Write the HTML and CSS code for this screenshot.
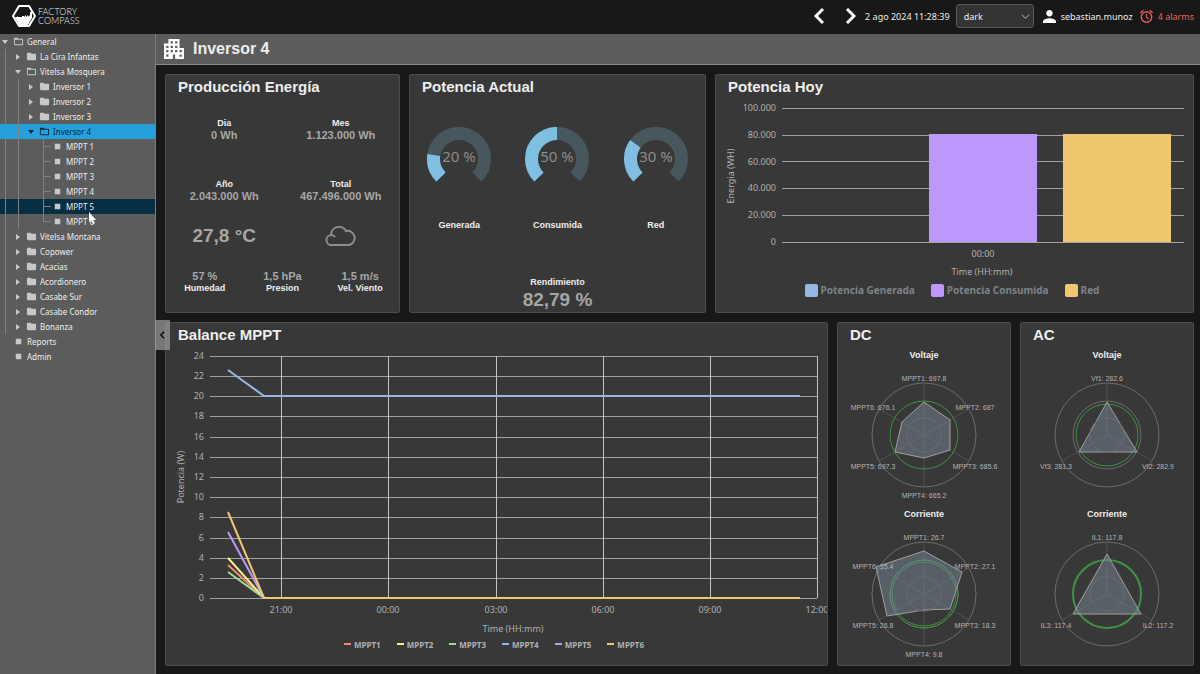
FILE: index.html
```html
<!DOCTYPE html>
<html lang="es">
<head>
    <meta charset="UTF-8">
    <meta name="viewport" content="width=device-width, initial-scale=1.0">
    <title>Factory Compass - Inversor 4</title>
    <link rel="stylesheet" href="styles.css">
</head>
<body>
    <!-- Icon definitions -->
    <svg class="icon-defs" aria-hidden="true">
        <symbol id="folder" viewBox="0 0 24 24">
            <path d="M10 4H4c-1.1 0-2 .9-2 2v12c0 1.1.9 2 2 2h16c1.1 0 2-.9 2-2V8c0-1.1-.9-2-2-2h-8l-2-2z"/>
        </symbol>
        <symbol id="folder-open" viewBox="0 0 24 24">
            <path d="M20 6h-8l-2-2H4c-1.1 0-2 .9-2 2v12c0 1.1.9 2 2 2h16c1.1 0 2-.9 2-2V8c0-1.1-.9-2-2-2zm0 12H4V8h16v10z"/>
        </symbol>
        <symbol id="leaf" viewBox="0 0 24 24">
            <path d="M6 6h12v12H6z"/>
        </symbol>
        <symbol id="arrow-right" viewBox="0 0 10 10">
            <path d="M3 2l4 3-4 3z"/>
        </symbol>
        <symbol id="arrow-down" viewBox="0 0 10 10">
            <path d="M2 3h6l-3 4z"/>
        </symbol>
    </svg>

    <header class="topbar">
        <a href="#" class="brand">
            <svg class="brand-logo" viewBox="0 0 24 24" aria-hidden="true">
                <path class="hex" d="M7 2h10l6 10-6 10H7L1 12z"/>
                <path class="plant" d="M3 13h2v-1l1 1h4v-1h2v1l2-2v2l2-2v2l2-2V8h2v6l-4 7H7z"/>
            </svg>
            <span class="brand-name">FACTORY<br>COMPASS</span>
        </a>
        <div class="topbar-tools">
            <button class="nav-btn" aria-label="Anterior">
                <svg viewBox="0 0 10 16"><path d="M9 1L2 8l7 7"/></svg>
            </button>
            <button class="nav-btn" aria-label="Siguiente">
                <svg viewBox="0 0 10 16"><path d="M1 1l7 7-7 7"/></svg>
            </button>
            <time class="clock">2 ago 2024 11:28:39</time>
            <div class="theme-select">
                <select aria-label="Tema">
                    <option>dark</option>
                    <option>light</option>
                </select>
                <svg viewBox="0 0 10 10" aria-hidden="true"><path d="M1 3l4 4 4-4"/></svg>
            </div>
            <a href="#" class="user">
                <svg viewBox="4 4 16 16" aria-hidden="true"><path d="M12 12c2.2 0 4-1.8 4-4s-1.8-4-4-4-4 1.8-4 4 1.8 4 4 4zm0 2c-2.7 0-8 1.3-8 4v2h16v-2c0-2.7-5.3-4-8-4z"/></svg>
                sebastian.munoz
            </a>
            <a href="#" class="alarms">
                <svg viewBox="2 1 20 21" aria-hidden="true"><path d="M22 5.72l-4.6-3.86-1.29 1.53 4.6 3.86L22 5.72zM7.88 3.39L6.6 1.86 2 5.71l1.29 1.53 4.59-3.85zM12.5 8H11v6l4.75 2.85.75-1.23-4-2.37V8zM12 4c-4.97 0-9 4.03-9 9s4.02 9 9 9c4.97 0 9-4.03 9-9s-4.03-9-9-9zm0 16c-3.87 0-7-3.13-7-7s3.13-7 7-7 7 3.13 7 7-3.13 7-7 7z"/></svg>
                4 alarms
            </a>
        </div>
    </header>

    <div class="layout">
        <nav class="sidebar">
            <ul class="tree">
                <li>
                    <a href="#" class="row"><svg class="arrow"><use href="#arrow-down"/></svg><svg class="icon"><use href="#folder-open"/></svg>General</a>
                    <ul class="guide">
                        <li><a href="#" class="row"><svg class="arrow"><use href="#arrow-right"/></svg><svg class="icon"><use href="#folder"/></svg>La Cira Infantas</a></li>
                        <li>
                            <a href="#" class="row"><svg class="arrow"><use href="#arrow-down"/></svg><svg class="icon"><use href="#folder-open"/></svg>Vitelsa Mosquera</a>
                            <ul class="guide">
                                <li><a href="#" class="row"><svg class="arrow"><use href="#arrow-right"/></svg><svg class="icon"><use href="#folder"/></svg>Inversor 1</a></li>
                                <li><a href="#" class="row"><svg class="arrow"><use href="#arrow-right"/></svg><svg class="icon"><use href="#folder"/></svg>Inversor 2</a></li>
                                <li><a href="#" class="row"><svg class="arrow"><use href="#arrow-right"/></svg><svg class="icon"><use href="#folder"/></svg>Inversor 3</a></li>
                                <li>
                                    <a href="#" class="row selected"><svg class="arrow"><use href="#arrow-down"/></svg><svg class="icon"><use href="#folder-open"/></svg>Inversor 4</a>
                                    <ul>
                                        <li><a href="#" class="row"><span class="elbow"></span><svg class="icon"><use href="#leaf"/></svg>MPPT 1</a></li>
                                        <li><a href="#" class="row"><span class="elbow"></span><svg class="icon"><use href="#leaf"/></svg>MPPT 2</a></li>
                                        <li><a href="#" class="row"><span class="elbow"></span><svg class="icon"><use href="#leaf"/></svg>MPPT 3</a></li>
                                        <li><a href="#" class="row"><span class="elbow"></span><svg class="icon"><use href="#leaf"/></svg>MPPT 4</a></li>
                                        <li>
                                            <a href="#" class="row hovered"><span class="elbow"></span><svg class="icon"><use href="#leaf"/></svg>MPPT 5
                                                <svg class="pointer" viewBox="0 0 8 12" aria-hidden="true"><path d="M0 0v10l2-2 2 4 2-1-2-3h3z"/></svg>
                                            </a>
                                        </li>
                                        <li><a href="#" class="row"><span class="elbow last"></span><svg class="icon"><use href="#leaf"/></svg>MPPT 6</a></li>
                                    </ul>
                                </li>
                            </ul>
                        </li>
                        <li><a href="#" class="row"><svg class="arrow"><use href="#arrow-right"/></svg><svg class="icon"><use href="#folder"/></svg>Vitelsa Montana</a></li>
                        <li><a href="#" class="row"><svg class="arrow"><use href="#arrow-right"/></svg><svg class="icon"><use href="#folder"/></svg>Copower</a></li>
                        <li><a href="#" class="row"><svg class="arrow"><use href="#arrow-right"/></svg><svg class="icon"><use href="#folder"/></svg>Acacias</a></li>
                        <li><a href="#" class="row"><svg class="arrow"><use href="#arrow-right"/></svg><svg class="icon"><use href="#folder"/></svg>Acordionero</a></li>
                        <li><a href="#" class="row"><svg class="arrow"><use href="#arrow-right"/></svg><svg class="icon"><use href="#folder"/></svg>Casabe Sur</a></li>
                        <li><a href="#" class="row"><svg class="arrow"><use href="#arrow-right"/></svg><svg class="icon"><use href="#folder"/></svg>Casabe Condor</a></li>
                        <li><a href="#" class="row"><svg class="arrow"><use href="#arrow-right"/></svg><svg class="icon"><use href="#folder"/></svg>Bonanza</a></li>
                    </ul>
                </li>
                <li><a href="#" class="row"><span class="arrow"></span><svg class="icon"><use href="#leaf"/></svg>Reports</a></li>
                <li><a href="#" class="row"><span class="arrow"></span><svg class="icon"><use href="#leaf"/></svg>Admin</a></li>
            </ul>
        </nav>

        <button class="collapse-btn" aria-label="Ocultar menú">
            <svg viewBox="0 0 6 10"><path d="M5 1L1 5l4 4"/></svg>
        </button>

        <main class="content">
            <div class="page-title">
                <svg viewBox="3 3 18 18" aria-hidden="true"><path d="M17 11V3H7v4H3v14h8v-4h2v4h8V11h-4zM7 19H5v-2h2v2zm0-4H5v-2h2v2zm0-4H5V9h2v2zm4 4H9v-2h2v2zm0-4H9V9h2v2zm0-4H9V5h2v2zm4 8h-2v-2h2v2zm0-4h-2V9h2v2zm0-4h-2V5h2v2zm4 12h-2v-2h2v2zm0-4h-2v-2h2v2z"/></svg>
                <h1>Inversor 4</h1>
            </div>

            <div class="dashboard">
                <div class="cards cards-top">
                    <!-- Produccion -->
                    <section class="card">
                        <h2>Producción Energía</h2>
                        <div class="production">
                            <div class="stats two">
                                <div><b>Dia</b><span class="value">0 Wh</span></div>
                                <div><b>Mes</b><span class="value">1.123.000 Wh</span></div>
                            </div>
                            <div class="stats two">
                                <div><b>Año</b><span class="value">2.043.000 Wh</span></div>
                                <div><b>Total</b><span class="value">467.496.000 Wh</span></div>
                            </div>
                            <div class="stats two">
                                <div class="value-lg">27,8 °C</div>
                                <div><svg class="cloud" viewBox="0 0 32 20" role="img" aria-label="Nublado"><path d="M7 19a5 5 0 0 1-1-10 8 8 0 0 1 15-4 7 7 0 0 1 3 14zM6 9q3 0 4 2"/></svg></div>
                            </div>
                            <div class="stats three">
                                <div><span class="value">57 %</span><b>Humedad</b></div>
                                <div><span class="value">1,5 hPa</span><b>Presion</b></div>
                                <div><span class="value">1,5 m/s</span><b>Vel. Viento</b></div>
                            </div>
                        </div>
                    </section>

                    <!-- Potencia actual -->
                    <section class="card">
                        <h2>Potencia Actual</h2>
                        <div class="gauges">
                            <div class="gauge">
                                <svg viewBox="0 0 64 64">
                                    <path class="track" d="M14 50A25.5 25.5 0 1 1 50 50"/>
                                    <path class="level" pathLength="100" stroke-dasharray="20 100" d="M14 50A25.5 25.5 0 1 1 50 50"/>
                                    <text x="32" y="35">20 %</text>
                                </svg>
                                <b>Generada</b>
                            </div>
                            <div class="gauge">
                                <svg viewBox="0 0 64 64">
                                    <path class="track" d="M14 50A25.5 25.5 0 1 1 50 50"/>
                                    <path class="level" pathLength="100" stroke-dasharray="50 100" d="M14 50A25.5 25.5 0 1 1 50 50"/>
                                    <text x="32" y="35">50 %</text>
                                </svg>
                                <b>Consumida</b>
                            </div>
                            <div class="gauge">
                                <svg viewBox="0 0 64 64">
                                    <path class="track" d="M14 50A25.5 25.5 0 1 1 50 50"/>
                                    <path class="level" pathLength="100" stroke-dasharray="30 100" d="M14 50A25.5 25.5 0 1 1 50 50"/>
                                    <text x="32" y="35">30 %</text>
                                </svg>
                                <b>Red</b>
                            </div>
                        </div>
                        <div class="performance">
                            <b>Rendimiento</b>
                            <span class="value-lg">82,79 %</span>
                        </div>
                    </section>

                    <!-- Potencia hoy -->
                    <section class="card">
                        <h2>Potencia Hoy</h2>
                        <svg class="chart" viewBox="0 0 477 181">
                            <path class="grid" d="M66 9h402M66 36h402M66 62h402M66 89h402M66 116h402M66 143h402"/>
                            <rect class="bar-purple" x="213" y="35" width="108" height="108"/>
                            <rect class="bar-orange" x="347" y="35" width="108" height="108"/>
                            <g class="axis axis-y">
                                <text x="60" y="12">100.000</text>
                                <text x="60" y="39">80.000</text>
                                <text x="60" y="66">60.000</text>
                                <text x="60" y="92">40.000</text>
                                <text x="60" y="119">20.000</text>
                                <text x="60" y="146">0</text>
                            </g>
                            <g class="axis axis-x">
                                <text x="267" y="158">00:00</text>
                                <text x="266" y="176">Time (HH:mm)</text>
                                <text transform="translate(18 77) rotate(-90)">Energia (WH)</text>
                            </g>
                        </svg>
                        <ul class="legend legend-bars">
                            <li><i class="blue"></i>Potencia Generada</li>
                            <li><i class="purple"></i>Potencia Consumida</li>
                            <li><i class="orange"></i>Red</li>
                        </ul>
                    </section>
                </div>

                <div class="cards cards-bottom">
                    <!-- Balance -->
                    <section class="card">
                        <h2>Balance MPPT</h2>
                        <svg class="chart" viewBox="0 0 661 288">
                            <path class="grid" d="M44 9h607M44 29h607M44 49h607M44 69h607M44 90h607M44 110h607M44 130h607M44 150h607M44 170h607M44 191h607M44 211h607M44 231h607M44 251h607"/>
                            <path class="grid grid-v" d="M115 9v242M222 9v242M330 9v242M437 9v242M544 9v242M651 9v242"/>
                            <path class="line red" d="M62 218l36 33h536"/>
                            <path class="line yellow" d="M62 211l36 40h536"/>
                            <path class="line green" d="M62 225l36 26h536"/>
                            <path class="line blue" d="M62 23l36 26h536"/>
                            <path class="line purple" d="M62 185l36 66h536"/>
                            <path class="line orange" d="M62 165l36 86h536"/>
                            <g class="axis axis-y">
                                <text x="38" y="12">24</text>
                                <text x="38" y="32">22</text>
                                <text x="38" y="52">20</text>
                                <text x="38" y="72">18</text>
                                <text x="38" y="93">16</text>
                                <text x="38" y="113">14</text>
                                <text x="38" y="133">12</text>
                                <text x="38" y="153">10</text>
                                <text x="38" y="173">8</text>
                                <text x="38" y="194">6</text>
                                <text x="38" y="214">4</text>
                                <text x="38" y="234">2</text>
                                <text x="38" y="254">0</text>
                            </g>
                            <g class="axis axis-x">
                                <text x="115" y="266">21:00</text>
                                <text x="222" y="266">00:00</text>
                                <text x="330" y="266">03:00</text>
                                <text x="437" y="266">06:00</text>
                                <text x="544" y="266">09:00</text>
                                <text x="651" y="266">12:00</text>
                                <text x="347" y="285">Time (HH:mm)</text>
                                <text transform="translate(18 130) rotate(-90)">Potencia (W)</text>
                            </g>
                        </svg>
                        <ul class="legend legend-lines">
                            <li><i class="red"></i>MPPT1</li>
                            <li><i class="yellow"></i>MPPT2</li>
                            <li><i class="green"></i>MPPT3</li>
                            <li><i class="blue"></i>MPPT4</li>
                            <li><i class="purple"></i>MPPT5</li>
                            <li><i class="orange"></i>MPPT6</li>
                        </ul>
                    </section>

                    <!-- DC -->
                    <section class="card">
                        <h2>DC</h2>
                        <h3>Voltaje</h3>
                        <svg class="radar" viewBox="0 0 172 142">
                            <circle cx="86" cy="71" r="52"/>
                            <path class="spokes" d="M86 19v104M41 45l90 52M131 45L41 97"/>
                            <polygon points="86,38 112,56 112,86 86,94 57,88 64,58"/>
                            <circle cx="86" cy="71" r="17"/>
                            <circle class="ok" cx="86" cy="71" r="34"/>
                            <text x="86" y="17">MPPT1: 697.8</text>
                            <text x="137" y="46">MPPT2: 687</text>
                            <text x="137" y="105">MPPT3: 685.6</text>
                            <text x="86" y="134">MPPT4: 665.2</text>
                            <text x="35" y="105">MPPT5: 697.3</text>
                            <text x="35" y="46">MPPT6: 676.1</text>
                        </svg>
                        <h3>Corriente</h3>
                        <svg class="radar" viewBox="0 0 172 142">
                            <circle cx="86" cy="71" r="52"/>
                            <circle cx="86" cy="71" r="34"/>
                            <path class="spokes" d="M86 19v104M41 45l90 52M131 45L41 97"/>
                            <circle class="ok" cx="86" cy="71" r="34"/>
                            <circle class="ok" cx="86" cy="71" r="32"/>
                            <polygon points="86,28 124,49 112,86 86,87 49,93 38,44"/>
                            <circle cx="86" cy="71" r="17"/>
                            <text x="86" y="17">MPPT1: 26.7</text>
                            <text x="137" y="46">MPPT2: 27.1</text>
                            <text x="137" y="105">MPPT3: 18.3</text>
                            <text x="86" y="134">MPPT4: 9.8</text>
                            <text x="35" y="105">MPPT5: 26.8</text>
                            <text x="35" y="46">MPPT6: 35.4</text>
                        </svg>
                    </section>

                    <!-- AC -->
                    <section class="card">
                        <h2>AC</h2>
                        <h3>Voltaje</h3>
                        <svg class="radar" viewBox="0 0 172 142">
                            <circle cx="86" cy="71" r="52"/>
                            <circle cx="86" cy="71" r="34"/>
                            <path class="spokes" d="M86 19v52l45 26M86 71L41 97"/>
                            <circle class="ok" cx="86" cy="71" r="31"/>
                            <polygon points="86,38 116,88 58,88"/>
                            <circle cx="86" cy="71" r="17"/>
                            <text x="86" y="17">Vf1: 282.6</text>
                            <text x="137" y="105">Vf2: 282.9</text>
                            <text x="35" y="105">Vf3: 281.3</text>
                        </svg>
                        <h3>Corriente</h3>
                        <svg class="radar" viewBox="0 0 172 142">
                            <circle cx="86" cy="71" r="52"/>
                            <path class="spokes" d="M86 19v52l45 26M86 71L41 97"/>
                            <circle class="ok thick" cx="86" cy="71" r="34"/>
                            <polygon points="86,31 120,91 52,91"/>
                            <circle cx="86" cy="71" r="17"/>
                            <text x="86" y="17">IL1: 117.8</text>
                            <text x="137" y="105">IL2: 117.2</text>
                            <text x="35" y="105">IL3: 117.4</text>
                        </svg>
                    </section>
                </div>
            </div>
        </main>
    </div>
</body>
</html>
```

FILE: styles.css
```css
:root {
    --bg: #181818;
    --card-bg: #383838;
    --card-border: #4c4c4c;
    --panel: #5c5c5c;
    --text: #eeeeee;
    --muted: #a6a6a6;
    --red: #f08a76;
    --yellow: #f8f08a;
    --green: #a0dc90;
    --blue: #96b8e4;
    --purple: #be97fc;
    --orange: #f0c76e;
    --ui-font: "Noto Sans", "Open Sans", sans-serif;
    --title-font: "Liberation Sans", Arial, sans-serif;
}

* {
    box-sizing: border-box;
}

body {
    display: flex;
    flex-direction: column;
    min-height: 100vh;
    margin: 0;
    background-color: var(--bg);
    color: var(--text);
    font-family: var(--ui-font);
    font-size: 9px;
}

a {
    color: inherit;
    text-decoration: none;
}

ul {
    margin: 0;
    padding: 0;
    list-style: none;
}

button {
    padding: 0;
    border: none;
    background: none;
    cursor: pointer;
}

svg {
    display: block;
}

.icon-defs {
    display: none;
}

/* Top bar */
.topbar {
    display: flex;
    align-items: center;
    justify-content: space-between;
    height: 34px;
    padding: 0 6px 2px 12px;
}

.brand {
    display: flex;
    align-items: center;
    gap: 2px;
}

.brand-logo {
    width: 24px;
    height: 24px;
}

.brand-logo .hex {
    fill: none;
    stroke: #fff;
    stroke-width: 2;
    stroke-linejoin: round;
}

.brand-logo .plant {
    fill: #fff;
}

.brand-name {
    font-family: Lato, sans-serif;
    font-size: 9px;
    font-weight: 300;
    line-height: 9px;
}

.topbar-tools {
    display: flex;
    align-items: center;
}

.nav-btn {
    margin-right: 22px;
}

.nav-btn + .nav-btn {
    margin-right: 9px;
}

.nav-btn svg {
    width: 10px;
    height: 16px;
    fill: none;
    stroke: #fff;
    stroke-width: 3;
}

.theme-select {
    display: grid;
    align-items: center;
    width: 78px;
    margin: 0 9px 0 6px;
}

.theme-select > * {
    grid-area: 1 / 1;
}

.theme-select select {
    appearance: none;
    width: 100%;
    height: 24px;
    padding: 0 7px;
    border: 1px solid #5a5a5a;
    border-radius: 3px;
    background-color: #333;
    color: var(--text);
    font: inherit;
}

.theme-select svg {
    justify-self: end;
    width: 9px;
    height: 9px;
    margin-right: 4px;
    fill: none;
    stroke: #ccc;
    pointer-events: none;
}

.user,
.alarms {
    display: flex;
    align-items: center;
    gap: 5px;
}

.user svg {
    width: 13px;
    height: 13px;
    fill: #fff;
}

.alarms {
    margin-left: 7px;
    color: #f0605c;
}

.alarms svg {
    width: 13px;
    height: 14px;
    fill: currentColor;
}

/* Layout */
.layout {
    position: relative;
    display: flex;
    flex: 1;
}

.sidebar {
    flex: 0 0 156px;
    border-right: 1px solid #7c7c7c;
    background-color: var(--panel);
    font-size: 8px;
}

.row {
    --depth: 0;
    position: relative;
    display: flex;
    align-items: center;
    height: 15px;
    padding-left: calc(var(--depth) * 13px);
    white-space: nowrap;
}

.tree ul .row {
    --depth: 1;
}

.tree ul ul .row {
    --depth: 2;
}

.tree ul ul ul .row {
    --depth: 3;
}

.row .arrow {
    width: 10px;
    height: 10px;
    fill: #c8c8c8;
}

.row .icon {
    width: 11px;
    height: 11px;
    margin: 0 3px;
    fill: #c8c8c8;
}

.row.selected {
    background-color: #26a0da;
    color: #06283c;
}

.row.selected svg {
    fill: #06283c;
}

.row.hovered {
    background-color: #072f44;
}

.guide {
    position: relative;
}

.guide::before {
    content: "";
    position: absolute;
    z-index: 1;
    top: 0;
    bottom: 0;
    left: 5px;
    width: 1px;
    background-color: #808080;
}

.guide .guide::before {
    left: 18px;
}

.elbow {
    align-self: stretch;
    width: 8px;
    margin: 0 -2px 0 4px;
    border-left: 1px solid #808080;
    background: linear-gradient(#808080, #808080) 0 50% / 100% 1px no-repeat;
}

.elbow.last {
    height: 8px;
    align-self: flex-start;
    background-position: 0 100%;
}

.row .pointer {
    position: absolute;
    z-index: 2;
    top: 13px;
    left: 89px;
    width: 8px;
    height: 12px;
    fill: #fff;
}

.collapse-btn {
    position: absolute;
    z-index: 2;
    top: calc(50% - 34px);
    left: 155px;
    width: 15px;
    height: 30px;
    background-color: rgba(160, 160, 160, 0.7);
}

.collapse-btn svg {
    width: 5px;
    height: 8px;
    margin: 0 auto;
    fill: none;
    stroke: #111;
    stroke-width: 2;
}

.content {
    display: flex;
    flex: 1;
    flex-direction: column;
    min-width: 0;
}

.page-title {
    display: flex;
    align-items: center;
    gap: 9px;
    height: 31px;
    padding-left: 8px;
    border-bottom: 1px solid #8a8a8a;
    background-color: var(--panel);
}

.page-title svg {
    width: 20px;
    height: 20px;
    fill: #fff;
}

h1,
h2,
h3 {
    margin: 0;
    font-family: var(--title-font);
}

h1 {
    font-size: 16px;
    line-height: 20px;
}

/* Dashboard cards */
.dashboard {
    display: grid;
    flex: 1;
    grid-template-rows: 239fr 344fr;
    gap: 9px;
    padding: 9px 6px 8px 9px;
}

.cards {
    display: grid;
    gap: 9px;
}

.cards-top {
    grid-template-columns: 235fr 297fr 479fr;
}

.cards-bottom {
    grid-template-columns: 663fr 174fr 174fr;
}

.card {
    display: flex;
    flex-direction: column;
    min-width: 0;
    border: 1px solid var(--card-border);
    border-radius: 2px;
    background-color: var(--card-bg);
}

.card h2 {
    padding: 0 12px;
    font-size: 15px;
    line-height: 24px;
}

.card h3 {
    font-size: 9px;
    line-height: 17px;
    text-align: center;
}

.card b {
    display: block;
    font-family: var(--title-font);
    font-size: 9px;
    line-height: 12px;
}

.value,
.value-lg {
    display: block;
    color: var(--muted);
    font-family: var(--title-font);
    font-size: 11px;
    font-weight: bold;
    line-height: 12px;
}

.value-lg {
    font-size: 19px;
    line-height: 24px;
}

.production {
    display: grid;
    flex: 1;
    grid-template-rows: 2fr 2fr 1fr 2fr;
}

.stats {
    display: grid;
    align-items: center;
    text-align: center;
}

.two {
    grid-template-columns: 1fr 1fr;
}

.three {
    grid-template-columns: 1fr 1fr 1fr;
}

.cloud {
    width: 32px;
    height: 20px;
    margin: 0 auto;
    fill: none;
    stroke: #8e8e8e;
    stroke-width: 2;
}

/* Gauges */
.gauges {
    display: grid;
    grid-template-columns: 1fr 1fr 1fr;
    padding-top: 28px;
    text-align: center;
}

.gauge svg {
    width: 64px;
    height: 64px;
    margin: 0 auto 28px;
}

.gauge path {
    fill: none;
    stroke-width: 13;
}

.gauge .track {
    stroke: #48565e;
}

.gauge .level {
    stroke: #7fbfe2;
}

.gauge text {
    fill: #8c8c8c;
    font-size: 15px;
    text-anchor: middle;
}

.performance {
    margin-top: auto;
    text-align: center;
}

/* Charts */
.chart,
.radar {
    width: 100%;
    height: auto;
}

.grid {
    fill: none;
    stroke: #a2a2a2;
    shape-rendering: crispEdges;
}

.grid-v {
    stroke: #c4c4c4;
}

.axis {
    fill: #b0b0b0;
    font-size: 9px;
}

.axis-y {
    text-anchor: end;
}

.axis-x {
    text-anchor: middle;
}

.bar-purple {
    fill: var(--purple);
}

.bar-orange {
    fill: var(--orange);
}

.line {
    fill: none;
    stroke: currentColor;
    stroke-width: 2;
}

.red {
    color: var(--red);
}

.yellow {
    color: var(--yellow);
}

.green {
    color: var(--green);
}

.blue {
    color: var(--blue);
}

.purple {
    color: var(--purple);
}

.orange {
    color: var(--orange);
}

.legend {
    display: flex;
    align-items: center;
    justify-content: center;
    gap: 16px;
    padding-right: 5px;
    font-weight: bold;
}

.legend li {
    display: flex;
    align-items: center;
    gap: 3px;
}

.legend i {
    background-color: currentColor;
}

.legend-bars {
    height: 20px;
    color: #7c8288;
    font-size: 10px;
}

.legend-bars i {
    width: 13px;
    height: 13px;
    border-radius: 2px;
}

.legend-lines {
    height: 18px;
    color: #b0b0b0;
    font-size: 8px;
}

.legend-lines i {
    width: 7px;
    height: 2px;
}

.radar circle {
    fill: none;
    stroke: #6c6c6c;
}

.radar .ok {
    stroke: #3f9143;
}

.radar .thick {
    stroke-width: 2;
}

.radar .spokes {
    fill: none;
    stroke: #505050;
}

.radar polygon {
    fill: rgba(120, 134, 150, 0.5);
    stroke: #a0a0a0;
}

.radar text {
    fill: #b4b4b4;
    font-family: var(--title-font);
    font-size: 7px;
    text-anchor: middle;
}
```
